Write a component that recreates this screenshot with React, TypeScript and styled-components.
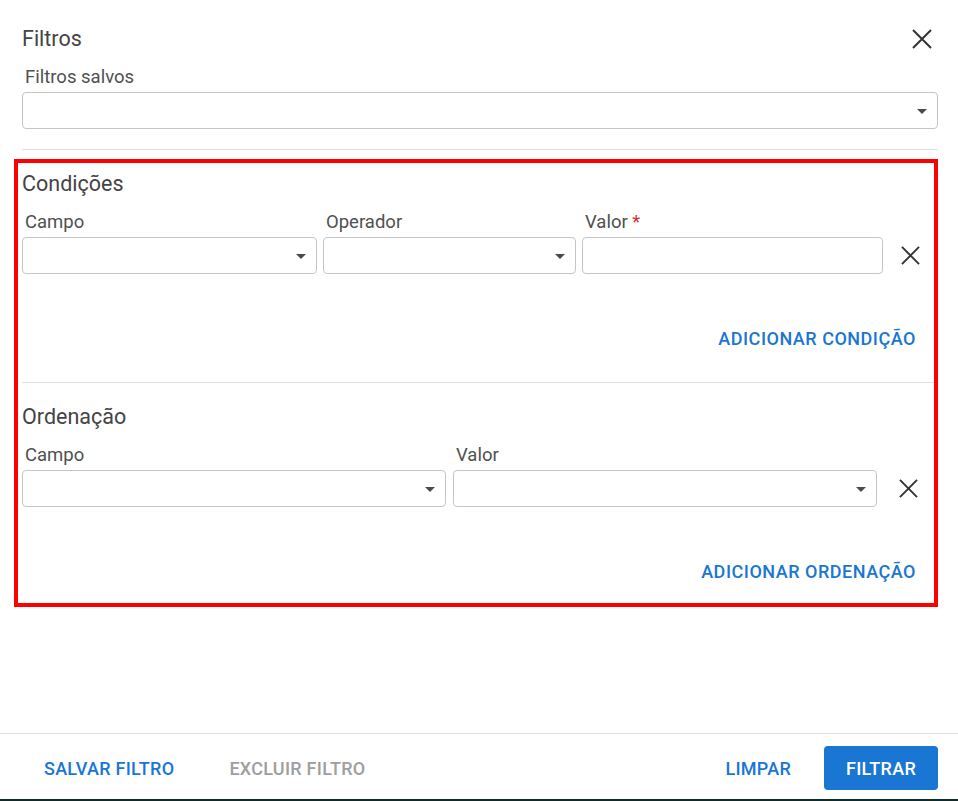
import styled, { createGlobalStyle } from 'styled-components';

const GlobalStyle = createGlobalStyle`
  html, body {
    margin: 0;
    padding: 0;
    background: #fff;
  }
  body {
    font-family: Roboto, "Liberation Sans", Arial, sans-serif;
  }
  * {
    box-sizing: border-box;
  }
`;

function CloseIcon({ size = 20 }: { size?: number }) {
	return (
		<svg width={size} height={size} viewBox="0 0 20 20">
			<path d="M1 1L19 19M19 1L1 19" stroke="#333" strokeWidth="2" fill="none" />
		</svg>
	);
}

function Caret() {
	return (
		<svg width="24" height="24" viewBox="0 0 24 24">
			<path d="M7 10l5 5 5-5z" fill="#4a4a4a" />
		</svg>
	);
}

function SelectBox() {
	return (
		<Select>
			<Caret />
		</Select>
	);
}

export default function App() {
	return (
		<>
			<GlobalStyle />
			<Page>
				<Header>
					<Title>Filtros</Title>
					<IconButton>
						<CloseIcon />
					</IconButton>
				</Header>
				<Padded>
					<Label>Filtros salvos</Label>
					<SelectBox />
				</Padded>
				<Divider />

				<Highlight>
					<Section>
						<SectionTitle>Condições</SectionTitle>
						<ConditionRow>
							<Field>
								<Label>Campo</Label>
								<SelectBox />
							</Field>
							<Field>
								<Label>Operador</Label>
								<SelectBox />
							</Field>
							<Field>
								<Label>
									Valor <Required>*</Required>
								</Label>
								<Input />
							</Field>
							<RemoveCell>
								<CloseIcon size={19} />
							</RemoveCell>
						</ConditionRow>
						<Actions>
							<TextButton>Adicionar condição</TextButton>
						</Actions>
					</Section>
					<SectionDivider />
					<Section $last>
						<SectionTitle>Ordenação</SectionTitle>
						<OrderRow>
							<Field>
								<Label>Campo</Label>
								<SelectBox />
							</Field>
							<Field>
								<Label>Valor</Label>
								<SelectBox />
							</Field>
							<RemoveCell>
								<CloseIcon size={19} />
							</RemoveCell>
						</OrderRow>
						<Actions>
							<TextButton>Adicionar ordenação</TextButton>
						</Actions>
					</Section>
				</Highlight>

				<Footer>
					<Group>
						<FooterButton>Salvar filtro</FooterButton>
						<FooterButton $disabled>Excluir filtro</FooterButton>
					</Group>
					<Group>
						<FooterButton>Limpar</FooterButton>
						<FooterButton $primary>Filtrar</FooterButton>
					</Group>
				</Footer>
			</Page>
		</>
	);
}

const Page = styled.div`
  width: 958px;
  height: 801px;
  display: flex;
  flex-direction: column;
  padding-top: 26px;
  border-bottom: 2px solid #0f2c2c;
  overflow: hidden;
`;

const Header = styled.div`
  display: flex;
  align-items: center;
  justify-content: space-between;
  height: 25px;
  padding: 0 26px 0 22px;
`;

const Title = styled.div`
  font-size: 21.5px;
  line-height: 25px;
  color: #444;
`;

const IconButton = styled.div`
  display: flex;
  align-items: center;
  justify-content: center;
  width: 20px;
  height: 20px;
`;

const Padded = styled.div`
  padding: 16px 20px 0 22px;
`;

const Label = styled.div`
  font-size: 18.5px;
  line-height: 20px;
  color: #505050;
  padding-left: 3px;
  margin-bottom: 5px;
  white-space: nowrap;
`;

const Required = styled.span`
  color: #d32f2f;
`;

const Select = styled.div`
  height: 37px;
  border: 1px solid #c4c4c4;
  border-radius: 4px;
  display: flex;
  align-items: center;
  justify-content: flex-end;
  padding-right: 3px;
  background: #fff;
`;

const Input = styled.div`
  height: 37px;
  border: 1px solid #c4c4c4;
  border-radius: 4px;
  background: #fff;
`;

const Divider = styled.div`
  height: 1px;
  background: #e0e0e0;
  margin: 20px 20px 0 22px;
`;

const Highlight = styled.div`
  margin: 9px 20px 0 14px;
  border: 4px solid #ff0000;
  padding-left: 4px;
`;

const Section = styled.div<{ $last?: boolean }>`
  padding-top: ${({ $last }) => ($last ? '22px' : '9px')};
  padding-bottom: ${({ $last }) => ($last ? '14px' : '26px')};
`;

const SectionTitle = styled.div`
  font-size: 21.5px;
  line-height: 24px;
  color: #444;
  margin-bottom: 16px;
`;

const ConditionRow = styled.div`
  display: grid;
  grid-template-columns: 295px 253px 301px 1fr;
  column-gap: 6px;
  align-items: end;
`;

const OrderRow = styled.div`
  display: grid;
  grid-template-columns: 424px 424px 1fr;
  column-gap: 7px;
  align-items: end;
`;

const Field = styled.div`
  display: flex;
  flex-direction: column;
`;

const RemoveCell = styled.div`
  height: 37px;
  display: flex;
  align-items: center;
  justify-content: center;
  padding-right: 2px;
`;

const Actions = styled.div`
  display: flex;
  justify-content: flex-end;
  margin-top: 46px;
  padding-right: 10px;
`;

const TextButton = styled.div`
  height: 36px;
  padding: 0 8px;
  display: flex;
  align-items: center;
  font-size: 18px;
  font-weight: 500;
  letter-spacing: 0.02857em;
  text-transform: uppercase;
  color: #1976d2;
`;

const SectionDivider = styled.div`
  height: 1px;
  background: #e0e0e0;
`;

const Footer = styled.div`
  margin-top: auto;
  border-top: 1px solid #e0e0e0;
  padding: 12px 20px 9px 22px;
  display: flex;
  justify-content: space-between;
`;

const Group = styled.div`
  display: flex;
  gap: 11px;
`;

const FooterButton = styled.div<{ $primary?: boolean; $disabled?: boolean }>`
  height: 44px;
  padding: 0 22px;
  display: flex;
  align-items: center;
  border-radius: 4px;
  font-size: 18px;
  font-weight: 500;
  letter-spacing: 0.015em;
  text-transform: uppercase;
  color: ${({ $primary, $disabled }) =>
		$primary ? '#fff' : $disabled ? '#9e9e9e' : '#1976d2'};
  background: ${({ $primary }) => ($primary ? '#1976d2' : 'transparent')};
`;
